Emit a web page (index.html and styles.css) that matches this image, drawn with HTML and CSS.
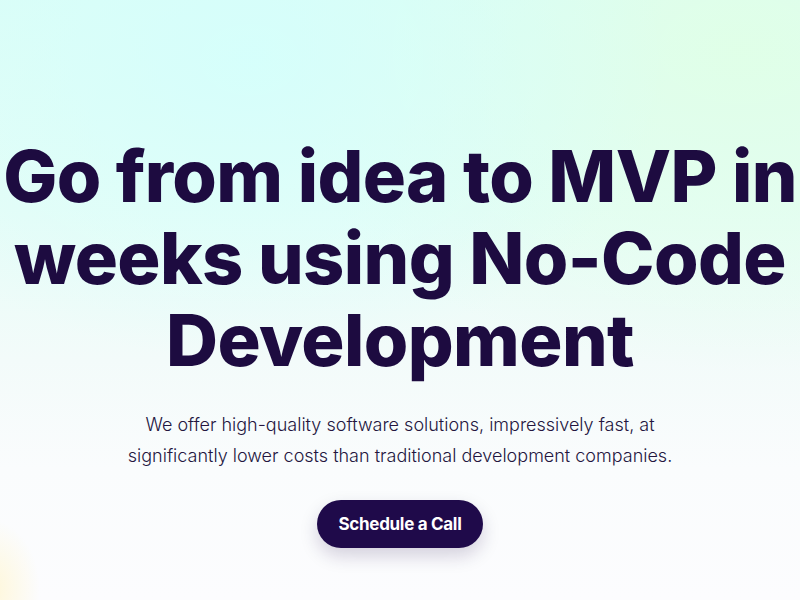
FILE: index.html
```html
<!DOCTYPE html>
<html lang="en">
<head>
<meta charset="utf-8">
<title>Go from idea to MVP</title>
<link rel="stylesheet" href="styles.css">
</head>
<body>
<main class="hero">
  <div class="blob-yellow"></div>
  <h1 class="hero-title">Go from idea to MVP in weeks using No-Code Development</h1>
  <p class="hero-text">We offer high-quality software solutions, impressively fast, at<br>significantly lower costs than traditional development companies.</p>
  <a class="cta" href="#">Schedule a Call</a>
</main>
</body>
</html>
```
FILE: styles.css
```css
html, body {
  margin: 0;
  padding: 0;
}
body {
  width: 800px;
  height: 600px;
  overflow: hidden;
  font-family: "Inter", "Liberation Sans", sans-serif;
  background: #fdfdfe;
}
.hero {
  position: relative;
  height: 600px;
  overflow: hidden;
  display: flex;
  flex-direction: column;
  align-items: center;
  padding-top: 135px;
  box-sizing: border-box;
  background:
    radial-gradient(ellipse 420px 300px at 250px 60px, rgba(212, 255, 252, 0.85), rgba(212, 255, 252, 0) 100%),
    radial-gradient(ellipse 480px 320px at 740px 50px, rgba(224, 255, 230, 0.9), rgba(224, 255, 230, 0) 100%),
    linear-gradient(180deg, #dcfdf6 0%, #e6fdf7 35%, #f3fbfa 60%, #fafcfd 78%, #fcfcfe 100%);
}
.blob-yellow {
  position: absolute;
  left: -60px;
  top: 520px;
  width: 100px;
  height: 140px;
  border-radius: 50%;
  background: radial-gradient(closest-side, rgba(255, 247, 214, 0.95), rgba(255, 247, 214, 0));
}
.hero-title {
  position: relative;
  margin: 0;
  font-size: 72px;
  line-height: 82px;
  font-weight: 800;
  letter-spacing: -0.6px;
  color: #1d0b40;
  text-align: center;
  width: 800px;
}
.hero-text {
  position: relative;
  margin: 28px 0 0;
  font-size: 18px;
  line-height: 31px;
  font-weight: 300;
  color: #24163f;
  text-align: center;
}
.cta {
  position: relative;
  margin-top: 29px;
  display: inline-flex;
  align-items: center;
  justify-content: center;
  width: 166px;
  height: 48px;
  border-radius: 24px;
  background: #1f0a4a;
  color: #ffffff;
  font-size: 17px;
  font-weight: 700;
  letter-spacing: -0.3px;
  text-decoration: none;
  box-shadow: 0 8px 18px rgba(31, 10, 74, 0.18);
}
```
